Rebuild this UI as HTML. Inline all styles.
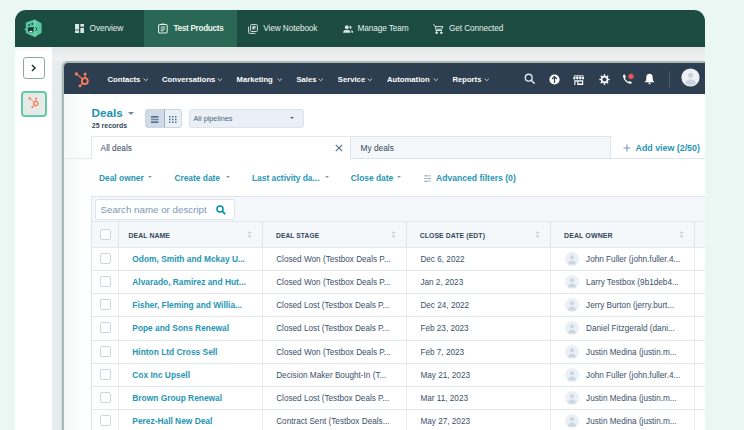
<!DOCTYPE html>
<html><head><meta charset="utf-8">
<style>
*{margin:0;padding:0;box-sizing:border-box}
html,body{width:744px;height:430px;overflow:hidden;background:#eaf7f3;font-family:"Liberation Sans",sans-serif}
#card{position:absolute;left:0;top:0;width:744px;height:430px;clip-path:inset(10px 39px 0 15px round 11px 11px 0 0);background:#fff}
.a{position:absolute;white-space:nowrap}
.tn{position:absolute;top:10px;height:37px;line-height:37px;font-size:8.3px;letter-spacing:-0.12px;color:#e4eeea;white-space:nowrap}
.hn{position:absolute;top:63.7px;height:31px;line-height:31px;font-size:7.7px;font-weight:bold;color:#fff;white-space:nowrap}
.chev{position:absolute;width:3px;height:3px;border-right:0.9px solid #c4ced8;border-bottom:0.9px solid #c4ced8;transform:rotate(45deg)}
.car{position:absolute;width:0;height:0;border-left:2.5px solid transparent;border-right:2.5px solid transparent;border-top:3px solid #7c98b6}
.flt{position:absolute;top:171px;height:14px;line-height:14px;font-size:8.4px;font-weight:bold;color:#1f96b4;white-space:nowrap}
.cb{position:absolute;left:100px;width:11px;height:11px;border:1px solid #cbd6e2;border-radius:2px;background:#fff}
.th{position:absolute;top:222.5px;height:26px;line-height:26px;font-size:7px;font-weight:bold;color:#33475b;white-space:nowrap;letter-spacing:0.1px}
.hl{position:absolute;height:1px;background:#e3e8ee}
.vl{position:absolute;width:1px;background:#e3e8ee}
.td{position:absolute;height:23px;line-height:25px;font-size:8.2px;color:#3b506a;white-space:nowrap}
.lk{position:absolute;height:23px;line-height:25px;font-size:8.4px;font-weight:bold;color:#1f96b4;white-space:nowrap}
.sort{position:absolute;width:5px;height:9px}
.av{position:absolute;left:565px;width:14px;height:14px;border-radius:50%;background:#eaf0f6;overflow:hidden}
</style></head><body>
<div id="card">
<div class="a" style="left:15px;top:10px;width:690px;height:37px;background:#1c4b42"></div>
<div class="a" style="left:144px;top:10px;width:93px;height:37px;background:#2a6754"></div>
<svg class="a" style="left:20px;top:16px" width="26" height="24" viewBox="20 16 26 24">
<path d="M25.8 23.2 Q25.8 22.6 26.4 22.3 L33.9 19.7 Q34.5 19.5 35.1 19.8 L41 22.9 Q41.6 23.2 41.6 23.9 V32.3 Q41.6 32.9 41 33.2 L35.1 36.8 Q34.5 37.1 33.9 36.8 L26.4 33.2 Q25.8 32.9 25.8 32.3Z" fill="#5ac8a0"/>
<path d="M34.5 19.6 L35.9 20.3 V36.4 L34.5 37Z" fill="#7ad8b6"/>
<path d="M24.6 28.6 h1.6 v1.4 h-1.6z" fill="#5ac8a0"/>
<rect x="28.3" y="24.3" width="1.6" height="1.6" fill="#173a33"/>
<rect x="31.5" y="23" width="1.6" height="1.7" fill="#173a33"/>
<path d="M27.7 27.4 L33.8 26.9 L33.4 31.2 Q32.6 33 30.6 33 Q28.6 33 28.2 31.2Z" fill="#173a33"/>
<path d="M29 31.6 Q30.6 30.4 32.6 30.9 Q31.9 32.6 30.4 32.7 Q29.4 32.6 29 31.6Z" fill="#e9f6f1"/>
<path d="M35 27.2 Q37 27.6 36.8 29 Q36.7 30.4 35 30.8" stroke="#173a33" stroke-width="0.8" fill="none"/>
</svg>
<svg class="a" style="left:74.6px;top:24px" width="9.6" height="9.2" viewBox="0 0 9.6 9.2" fill="#d9e7e2">
<rect x="0" y="0" width="4.1" height="5.6" /><rect x="5.4" y="0" width="4.1" height="2.7"/><rect x="0" y="6.4" width="4.1" height="2.8"/><rect x="5.4" y="3.9" width="4.1" height="5.3"/></svg>
<div class="tn" style="left:89.6px">Overview</div>
<svg class="a" style="left:157.6px;top:23px" width="10" height="10.5" viewBox="0 0 10 10.5" fill="none" stroke="#e6f0ec" stroke-width="1.05">
<rect x="0.6" y="1.5" width="8.6" height="8.5" rx="1.3"/><path d="M3.6 1.2 h2.6" stroke-width="1.5"/><path d="M2.7 4 h4.4 M2.7 5.9 h4.4 M2.7 7.8 h2.8"/></svg>
<div class="tn" style="left:173.4px;font-weight:bold;font-size:8.2px;letter-spacing:-0.3px;color:#eef5f2">Test Products</div>
<svg class="a" style="left:247.8px;top:23.6px" width="10" height="10" viewBox="0 0 10 10" fill="none" stroke="#d9e7e2" stroke-width="0.95">
<rect x="2.6" y="0.6" width="6.8" height="6.9" rx="0.9"/><path d="M0.6 2.6 v5.9 q0 0.9 0.9 0.9 h5.9"/><path d="M4.4 2.2 h3.2 v3.3 h-3.2z" fill="#d9e7e2" stroke="none"/><path d="M6.2 4 h1.4 v1.5 h-1.4z" fill="#1c4b42" stroke="none"/></svg>
<div class="tn" style="left:263.3px">View Notebook</div>
<svg class="a" style="left:342.5px;top:24.5px" width="10.5" height="8" viewBox="0 0 10.5 8" fill="#d9e7e2">
<circle cx="3.8" cy="2.2" r="1.9"/><path d="M0 7.8 q0.2 -3 3.8 -3 q3.6 0 3.8 3z"/><path d="M6.7 0.5 a1.8 1.8 0 0 1 0 3.6z"/><path d="M8 4.9 q2.3 0.6 2.5 2.9 h-1.8 q0 -1.6 -0.7 -2.9z"/></svg>
<div class="tn" style="left:357.4px">Manage Team</div>
<svg class="a" style="left:433px;top:23.5px" width="10.5" height="10.5" viewBox="0 0 10.5 10.5" fill="none" stroke="#d9e7e2" stroke-width="1">
<path d="M0.3 0.6 L2 1.6 L3.2 6.5 H9 M2.7 2.6 H9.9 L8.6 5.2 H3.6"/><circle cx="3.6" cy="8.8" r="0.9" fill="#d9e7e2"/><circle cx="8.4" cy="8.8" r="0.9" fill="#d9e7e2"/><path d="M3.2 6.5 v1.3"/></svg>
<div class="tn" style="left:449px">Get Connected</div>
<div class="a" style="left:52px;top:47px;width:660px;height:400px;background:#e7ecec"></div>
<div class="a" style="left:52px;top:47px;width:660px;height:14px;background:linear-gradient(#e3e7e7,#f1f3f3)"></div>
<div class="a" style="left:15px;top:47px;width:37px;height:5px;background:linear-gradient(rgba(0,0,0,0.04),rgba(0,0,0,0))"></div>
<div class="a" style="left:23px;top:57px;width:21.5px;height:21.5px;border:1.2px solid #8ea8a1;border-radius:3px;background:#fff"></div>
<svg class="a" style="left:30px;top:63.5px" width="7" height="8" viewBox="0 0 7 8"><path d="M2 1 L5 4 L2 7" stroke="#1f3b36" stroke-width="1.5" fill="none"/></svg>
<div class="a" style="left:21px;top:91px;width:26px;height:26px;border:2px solid #62cba3;border-radius:4px;background:#e6ebea"></div>
<svg class="a" style="left:28.3px;top:97.3px" width="11.52" height="11.52" viewBox="0 0 16 16">
<circle cx="10.8" cy="9.1" r="3" stroke="#ff7a59" stroke-width="1.8" fill="none"/>
<path d="M2.4 1.9 L8.6 7" stroke="#ff7a59" stroke-width="1.1"/><circle cx="2.4" cy="1.9" r="1.7" fill="#ff7a59"/>
<path d="M11.1 2.3 V6" stroke="#ff7a59" stroke-width="1.1"/><circle cx="11.1" cy="2.1" r="1.5" fill="#ff7a59"/>
<path d="M6 13.8 L8.7 11.2" stroke="#ff7a59" stroke-width="1.1"/><circle cx="6" cy="13.9" r="1.4" fill="#ff7a59"/>
</svg>
<div class="a" style="left:62px;top:61px;width:700px;height:420px;border:2px solid #a6bbb6;border-radius:6px;background:#fff;overflow:hidden;box-shadow:-1px 0 2px rgba(0,0,0,0.08)"><div style="position:absolute;left:0;top:0;width:700px;height:31px;background:#2d3e50"></div><div style="position:absolute;left:0;top:31px;width:700px;height:2px;background:linear-gradient(rgba(0,0,0,0.06),rgba(0,0,0,0))"></div><div style="position:absolute;left:0;top:31px;width:28px;height:400px;background:linear-gradient(90deg,#f6f8f8,#ffffff)"></div></div>
<svg class="a" style="left:74px;top:71.6px" width="16" height="16" viewBox="0 0 16 16">
<circle cx="10.8" cy="9.1" r="3" stroke="#ff7a59" stroke-width="1.8" fill="none"/>
<path d="M2.4 1.9 L8.6 7" stroke="#ff7a59" stroke-width="1.1"/><circle cx="2.4" cy="1.9" r="1.7" fill="#ff7a59"/>
<path d="M11.1 2.3 V6" stroke="#ff7a59" stroke-width="1.1"/><circle cx="11.1" cy="2.1" r="1.5" fill="#ff7a59"/>
<path d="M6 13.8 L8.7 11.2" stroke="#ff7a59" stroke-width="1.1"/><circle cx="6" cy="13.9" r="1.4" fill="#ff7a59"/>
</svg>
<div class="hn" style="left:107.5px">Contacts</div>
<svg class="a" style="left:142.7px;top:78px" width="5.5" height="3.5" viewBox="0 0 5.5 3.5"><path d="M0.6 0.6 L2.75 2.7 L4.9 0.6" stroke="#c9d3dd" stroke-width="0.95" fill="none"/></svg>
<div class="hn" style="left:162px">Conversations</div>
<svg class="a" style="left:217px;top:78px" width="5.5" height="3.5" viewBox="0 0 5.5 3.5"><path d="M0.6 0.6 L2.75 2.7 L4.9 0.6" stroke="#c9d3dd" stroke-width="0.95" fill="none"/></svg>
<div class="hn" style="left:236.5px">Marketing</div>
<svg class="a" style="left:276.5px;top:78px" width="5.5" height="3.5" viewBox="0 0 5.5 3.5"><path d="M0.6 0.6 L2.75 2.7 L4.9 0.6" stroke="#c9d3dd" stroke-width="0.95" fill="none"/></svg>
<div class="hn" style="left:296.4px">Sales</div>
<svg class="a" style="left:318px;top:78px" width="5.5" height="3.5" viewBox="0 0 5.5 3.5"><path d="M0.6 0.6 L2.75 2.7 L4.9 0.6" stroke="#c9d3dd" stroke-width="0.95" fill="none"/></svg>
<div class="hn" style="left:337.8px">Service</div>
<svg class="a" style="left:366.5px;top:78px" width="5.5" height="3.5" viewBox="0 0 5.5 3.5"><path d="M0.6 0.6 L2.75 2.7 L4.9 0.6" stroke="#c9d3dd" stroke-width="0.95" fill="none"/></svg>
<div class="hn" style="left:387px">Automation</div>
<svg class="a" style="left:433px;top:78px" width="5.5" height="3.5" viewBox="0 0 5.5 3.5"><path d="M0.6 0.6 L2.75 2.7 L4.9 0.6" stroke="#c9d3dd" stroke-width="0.95" fill="none"/></svg>
<div class="hn" style="left:452.4px">Reports</div>
<svg class="a" style="left:483.7px;top:78px" width="5.5" height="3.5" viewBox="0 0 5.5 3.5"><path d="M0.6 0.6 L2.75 2.7 L4.9 0.6" stroke="#c9d3dd" stroke-width="0.95" fill="none"/></svg>
<svg class="a" style="left:524px;top:73px" width="12" height="12" viewBox="0 0 12 12"><circle cx="4.7" cy="4.7" r="3.4" stroke="#dfe6ee" stroke-width="1.4" fill="none"/><path d="M7.2 7.2 L10.6 10.6" stroke="#dfe6ee" stroke-width="1.5"/></svg>
<svg class="a" style="left:549px;top:73.5px" width="11" height="11" viewBox="0 0 11 11"><circle cx="5.5" cy="5.5" r="5.1" fill="#fff"/><path d="M5.5 9 V2.6 M3 5 L5.5 2.5 L8 5" stroke="#2d3e50" stroke-width="1.2" fill="none"/></svg>
<svg class="a" style="left:572.5px;top:74.5px" width="11.5" height="10.5" viewBox="0 0 11.5 10.5" fill="#fff"><path d="M1.2 0.3 H10.3 L11.3 3.2 Q11.3 4.4 10 4.4 Q8.7 4.4 8.6 3.3 Q8.4 4.4 7.2 4.4 Q5.9 4.4 5.75 3.3 Q5.6 4.4 4.3 4.4 Q3.1 4.4 2.9 3.3 Q2.8 4.4 1.5 4.4 Q0.2 4.4 0.2 3.2Z"/><path d="M0.3 1.6 H11.2" stroke="#2d3e50" stroke-width="0.5"/><path d="M3 0.3 L2.6 4 M5.75 0.3 V4 M8.5 0.3 L8.9 4" stroke="#2d3e50" stroke-width="0.55"/><path d="M1.3 5.2 H10.2 V10.3 H1.3Z"/><rect x="2.4" y="6.6" width="1.9" height="3.7" fill="#2d3e50"/><rect x="5.4" y="6.6" width="3.6" height="1.9" fill="#2d3e50"/></svg>
<svg class="a" style="left:598.5px;top:74px" width="11" height="11" viewBox="0 0 11 11"><g fill="#fff"><circle cx="5.5" cy="5.5" r="3.6"/>
<rect x="4.7" y="0.3" width="1.6" height="2.2" rx="0.3" transform="rotate(0 5.5 5.5)"/><rect x="4.7" y="0.3" width="1.6" height="2.2" rx="0.3" transform="rotate(45 5.5 5.5)"/><rect x="4.7" y="0.3" width="1.6" height="2.2" rx="0.3" transform="rotate(90 5.5 5.5)"/><rect x="4.7" y="0.3" width="1.6" height="2.2" rx="0.3" transform="rotate(135 5.5 5.5)"/><rect x="4.7" y="0.3" width="1.6" height="2.2" rx="0.3" transform="rotate(180 5.5 5.5)"/><rect x="4.7" y="0.3" width="1.6" height="2.2" rx="0.3" transform="rotate(225 5.5 5.5)"/><rect x="4.7" y="0.3" width="1.6" height="2.2" rx="0.3" transform="rotate(270 5.5 5.5)"/><rect x="4.7" y="0.3" width="1.6" height="2.2" rx="0.3" transform="rotate(315 5.5 5.5)"/></g><circle cx="5.5" cy="5.5" r="2.1" fill="#2d3e50"/></svg>
<svg class="a" style="left:622px;top:72.5px" width="13" height="12" viewBox="0 0 13 12"><path d="M0.9 2.9 Q0.7 1.9 2 1.4 L2.5 1.3 L3.9 4.1 L2.9 5.2 Q3.8 7.7 6.3 8.9 L7.3 7.9 L9.9 9.2 L9.8 9.8 Q9.4 10.9 8.3 10.7 Q2.3 9.6 0.9 2.9Z" fill="#fff"/><circle cx="9" cy="3.4" r="3" fill="#f2545b" stroke="#2d3e50" stroke-width="0.7"/></svg>
<svg class="a" style="left:644px;top:72.5px" width="11" height="12" viewBox="0 0 11 12" fill="#fff"><path d="M5.5 0.8 Q8.6 0.8 8.7 4.5 L8.9 7.6 L10.5 9.3 H0.5 L2.1 7.6 L2.3 4.5 Q2.4 0.8 5.5 0.8Z"/><rect x="4.6" y="9.5" width="1.8" height="1.7"/></svg>
<div class="a" style="left:668.5px;top:70.5px;width:1px;height:17px;background:#425b76"></div>
<svg class="a" style="left:680.8px;top:68.2px" width="19" height="19" viewBox="0 0 20 20"><circle cx="10" cy="10" r="9.6" fill="#eef2f6"/><circle cx="10" cy="7.6" r="2.7" fill="#cbd6e2"/><path d="M4.2 16.2 Q5.2 11.8 10 11.8 Q14.8 11.8 15.8 16.2 Q13.5 18.3 10 18.3 Q6.5 18.3 4.2 16.2Z" fill="#cbd6e2"/></svg>
<div class="a" style="left:91.5px;top:104px;height:18px;line-height:18px;font-size:11.7px;font-weight:bold;color:#1a93b2">Deals</div>
<div class="car" style="left:127.5px;top:111.5px;border-left-width:3px;border-right-width:3px;border-top-width:3.5px;border-top-color:#6a87a6"></div>
<div class="a" style="left:91.8px;top:119.7px;height:11px;line-height:11px;font-size:7px;font-weight:bold;color:#33475b">25 records</div>
<div class="a" style="left:145px;top:109px;width:37px;height:19px;border:1px solid #cbd6e2;border-radius:3px;background:#eaf0f6;overflow:hidden"><div style="position:absolute;left:-1px;top:-1px;width:19.5px;height:19px;background:#d0dbe7;border:1px solid #99afc4;border-radius:3px 0 0 3px"></div></div>
<svg class="a" style="left:151px;top:115.5px" width="7.5" height="7" viewBox="0 0 7.5 7"><rect x="0" y="0" width="7.5" height="1.6" fill="#516f90"/><rect x="0" y="2.7" width="7.5" height="1.6" fill="#6d88a4"/><rect x="0" y="5.4" width="7.5" height="1.6" fill="#516f90"/></svg>
<svg class="a" style="left:169px;top:115.5px" width="7.5" height="7" viewBox="0 0 7.5 7" fill="#516f90"><rect x="0" y="0" width="1.5" height="1.5"/><rect x="0" y="2.75" width="1.5" height="1.5"/><rect x="0" y="5.5" width="1.5" height="1.5"/><rect x="3" y="0" width="1.5" height="1.5"/><rect x="3" y="2.75" width="1.5" height="1.5"/><rect x="3" y="5.5" width="1.5" height="1.5"/><rect x="6" y="0" width="1.5" height="1.5"/><rect x="6" y="2.75" width="1.5" height="1.5"/><rect x="6" y="5.5" width="1.5" height="1.5"/></svg>
<div class="a" style="left:189px;top:109px;width:115px;height:19px;border:1px solid #dbe3ec;border-radius:3px;background:#eaf0f6"></div>
<div class="a" style="left:193.5px;top:112px;height:13px;line-height:13px;font-size:7.3px;color:#4a6482">All pipelines</div>
<div class="car" style="left:290px;top:117.3px;border-left-width:2px;border-right-width:2px;border-top-width:2.4px;border-top-color:#516f90"></div>
<div class="a" style="left:64px;top:158px;width:27px;height:1px;background:#e6eaef"></div>
<div class="a" style="left:91px;top:136px;width:260px;height:23px;border:1px solid #e3e8ee;border-bottom:none;background:#fff"></div>
<div class="a" style="left:100.6px;top:141px;height:14px;line-height:14px;font-size:8.3px;color:#33475b">All deals</div>
<svg class="a" style="left:334.8px;top:144.3px" width="8" height="8" viewBox="0 0 8 8"><path d="M0.8 0.8 L7.2 7.2 M7.2 0.8 L0.8 7.2" stroke="#516f90" stroke-width="1.15"/></svg>
<div class="a" style="left:350px;top:136px;width:261px;height:23px;border:1px solid #dfe3eb;background:#f5f8fa"></div>
<div class="a" style="left:360.6px;top:141px;height:14px;line-height:14px;font-size:8.3px;color:#33475b">My deals</div>
<div class="a" style="left:611px;top:158px;width:100px;height:1px;background:#dfe3eb"></div>
<svg class="a" style="left:622.5px;top:143.5px" width="8" height="8" viewBox="0 0 8 8"><path d="M4 0.5 V7.5 M0.5 4 H7.5" stroke="#7c98b6" stroke-width="1.1"/></svg>
<div class="a" style="left:635.5px;top:141px;height:14px;line-height:14px;font-size:8.85px;font-weight:bold;color:#1f96b4">Add view (2/50)</div>
<div class="flt" style="left:99px">Deal owner</div>
<div class="car" style="left:148px;top:176.2px;border-left-width:2.2px;border-right-width:2.2px;border-top-width:2.4px;border-top-color:#7c98b6"></div>
<div class="flt" style="left:174.4px">Create date</div>
<div class="car" style="left:226px;top:176.2px;border-left-width:2.2px;border-right-width:2.2px;border-top-width:2.4px;border-top-color:#7c98b6"></div>
<div class="flt" style="left:252px">Last activity da...</div>
<div class="car" style="left:325px;top:176.2px;border-left-width:2.2px;border-right-width:2.2px;border-top-width:2.4px;border-top-color:#7c98b6"></div>
<div class="flt" style="left:350.8px">Close date</div>
<div class="car" style="left:397px;top:176.2px;border-left-width:2.2px;border-right-width:2.2px;border-top-width:2.4px;border-top-color:#7c98b6"></div>
<svg class="a" style="left:423.8px;top:174.5px" width="7.5" height="7" viewBox="0 0 7.5 7" fill="none" stroke="#8da4bd" stroke-width="0.75"><path d="M0 0.8 H7.5 M0 3.5 H7.5 M0 6.2 H7.5"/><path d="M2.3 0 V1.6 M5.2 2.7 V4.3 M2.3 5.4 V7" stroke-width="0.9"/></svg>
<div class="flt" style="left:436px;font-size:8.6px">Advanced filters (0)</div>
<div class="a" style="left:91px;top:196px;width:640px;height:240px;border:1px solid #dfe3eb;background:#f5f8fa"></div>
<div class="a" style="left:94.5px;top:199px;width:140.5px;height:21px;border:1px solid #dfe3eb;border-radius:3px;background:#fff"></div>
<div class="a" style="left:100.5px;top:202px;height:15px;line-height:15px;font-size:9.75px;color:#7c98b6">Search name or descript</div>
<svg class="a" style="left:216px;top:204.5px" width="10" height="10" viewBox="0 0 10 10"><circle cx="4" cy="4" r="3" stroke="#0091ae" stroke-width="1.5" fill="none"/><path d="M6.2 6.2 L9.2 9.2" stroke="#0091ae" stroke-width="1.7"/></svg>
<div class="hl" style="left:91px;top:221px;width:640px"></div>
<div class="cb" style="top:229.3px"></div>
<div class="th" style="left:128.5px;font-size:6.85px">DEAL NAME</div>
<div class="th" style="left:276px;font-size:6.65px">DEAL STAGE</div>
<div class="th" style="left:419.7px;font-size:6.85px">CLOSE DATE (EDT)</div>
<div class="th" style="left:564px;font-size:7px">DEAL OWNER</div>
<svg class="sort" style="left:247.0px;top:229.5px" viewBox="0 0 5 9"><path d="M0.5 3.5 L2.5 1 L4.5 3.5Z M0.5 5.5 L2.5 8 L4.5 5.5Z" fill="#c3cfdc"/></svg>
<svg class="sort" style="left:391.0px;top:229.5px" viewBox="0 0 5 9"><path d="M0.5 3.5 L2.5 1 L4.5 3.5Z M0.5 5.5 L2.5 8 L4.5 5.5Z" fill="#c3cfdc"/></svg>
<svg class="sort" style="left:535.1px;top:229.5px" viewBox="0 0 5 9"><path d="M0.5 3.5 L2.5 1 L4.5 3.5Z M0.5 5.5 L2.5 8 L4.5 5.5Z" fill="#c3cfdc"/></svg>
<svg class="sort" style="left:679.3px;top:229.5px" viewBox="0 0 5 9"><path d="M0.5 3.5 L2.5 1 L4.5 3.5Z M0.5 5.5 L2.5 8 L4.5 5.5Z" fill="#c3cfdc"/></svg>
<div class="a" style="left:92px;top:247px;width:640px;height:200px;background:#fff"></div>
<div class="hl" style="left:91px;top:247px;width:640px"></div>
<div class="vl" style="left:118.0px;top:221px;height:26px;background:#dfe4eb"></div>
<div class="vl" style="left:118.0px;top:248px;height:200px;background:#eaedf2"></div>
<div class="vl" style="left:262.0px;top:221px;height:26px;background:#dfe4eb"></div>
<div class="vl" style="left:262.0px;top:248px;height:200px;background:#eaedf2"></div>
<div class="vl" style="left:406.0px;top:221px;height:26px;background:#dfe4eb"></div>
<div class="vl" style="left:406.0px;top:248px;height:200px;background:#eaedf2"></div>
<div class="vl" style="left:550.1px;top:221px;height:26px;background:#dfe4eb"></div>
<div class="vl" style="left:550.1px;top:248px;height:200px;background:#eaedf2"></div>
<div class="vl" style="left:694.3px;top:221px;height:26px;background:#dfe4eb"></div>
<div class="vl" style="left:694.3px;top:248px;height:200px;background:#eaedf2"></div>
<div class="hl" style="left:91px;top:270.15px;width:640px"></div>
<div class="cb" style="top:253.00px"></div>
<div class="lk" style="left:132.3px;top:247.00px">Odom, Smith and Mckay U...</div>
<div class="td" style="left:276.2px;top:247.00px">Closed Won (Testbox Deals P...</div>
<div class="td" style="left:420.4px;top:247.00px">Dec 6, 2022</div>
<div class="av" style="top:252.00px"><svg width="14" height="14" viewBox="0 0 14 14"><circle cx="7" cy="5.3" r="2" fill="#cbd6e2"/><path d="M3 12.5 Q3.5 8.6 7 8.6 Q10.5 8.6 11 12.5Z" fill="#cbd6e2"/></svg></div>
<div class="td" style="left:586.1px;top:247.00px">John Fuller (john.fuller.4...</div>
<div class="hl" style="left:91px;top:293.30px;width:640px"></div>
<div class="cb" style="top:276.15px"></div>
<div class="lk" style="left:132.3px;top:270.15px">Alvarado, Ramirez and Hut...</div>
<div class="td" style="left:276.2px;top:270.15px">Closed Won (Testbox Deals P...</div>
<div class="td" style="left:420.4px;top:270.15px">Jan 2, 2023</div>
<div class="av" style="top:275.15px"><svg width="14" height="14" viewBox="0 0 14 14"><circle cx="7" cy="5.3" r="2" fill="#cbd6e2"/><path d="M3 12.5 Q3.5 8.6 7 8.6 Q10.5 8.6 11 12.5Z" fill="#cbd6e2"/></svg></div>
<div class="td" style="left:586.1px;top:270.15px">Larry Testbox (9b1deb4...</div>
<div class="hl" style="left:91px;top:316.45px;width:640px"></div>
<div class="cb" style="top:299.30px"></div>
<div class="lk" style="left:132.3px;top:293.30px">Fisher, Fleming and Willia...</div>
<div class="td" style="left:276.2px;top:293.30px">Closed Lost (Testbox Deals P...</div>
<div class="td" style="left:420.4px;top:293.30px">Dec 24, 2022</div>
<div class="av" style="top:298.30px"><svg width="14" height="14" viewBox="0 0 14 14"><circle cx="7" cy="5.3" r="2" fill="#cbd6e2"/><path d="M3 12.5 Q3.5 8.6 7 8.6 Q10.5 8.6 11 12.5Z" fill="#cbd6e2"/></svg></div>
<div class="td" style="left:586.1px;top:293.30px">Jerry Burton (jerry.burt...</div>
<div class="hl" style="left:91px;top:339.60px;width:640px"></div>
<div class="cb" style="top:322.45px"></div>
<div class="lk" style="left:132.3px;top:316.45px">Pope and Sons Renewal</div>
<div class="td" style="left:276.2px;top:316.45px">Closed Lost (Testbox Deals P...</div>
<div class="td" style="left:420.4px;top:316.45px">Feb 23, 2023</div>
<div class="av" style="top:321.45px"><svg width="14" height="14" viewBox="0 0 14 14"><circle cx="7" cy="5.3" r="2" fill="#cbd6e2"/><path d="M3 12.5 Q3.5 8.6 7 8.6 Q10.5 8.6 11 12.5Z" fill="#cbd6e2"/></svg></div>
<div class="td" style="left:586.1px;top:316.45px">Daniel Fitzgerald (dani...</div>
<div class="hl" style="left:91px;top:362.75px;width:640px"></div>
<div class="cb" style="top:345.60px"></div>
<div class="lk" style="left:132.3px;top:339.60px">Hinton Ltd Cross Sell</div>
<div class="td" style="left:276.2px;top:339.60px">Closed Won (Testbox Deals P...</div>
<div class="td" style="left:420.4px;top:339.60px">Feb 7, 2023</div>
<div class="av" style="top:344.60px"><svg width="14" height="14" viewBox="0 0 14 14"><circle cx="7" cy="5.3" r="2" fill="#cbd6e2"/><path d="M3 12.5 Q3.5 8.6 7 8.6 Q10.5 8.6 11 12.5Z" fill="#cbd6e2"/></svg></div>
<div class="td" style="left:586.1px;top:339.60px">Justin Medina (justin.m...</div>
<div class="hl" style="left:91px;top:385.90px;width:640px"></div>
<div class="cb" style="top:368.75px"></div>
<div class="lk" style="left:132.3px;top:362.75px">Cox Inc Upsell</div>
<div class="td" style="left:276.2px;top:362.75px">Decision Maker Bought-In (T...</div>
<div class="td" style="left:420.4px;top:362.75px">May 21, 2023</div>
<div class="av" style="top:367.75px"><svg width="14" height="14" viewBox="0 0 14 14"><circle cx="7" cy="5.3" r="2" fill="#cbd6e2"/><path d="M3 12.5 Q3.5 8.6 7 8.6 Q10.5 8.6 11 12.5Z" fill="#cbd6e2"/></svg></div>
<div class="td" style="left:586.1px;top:362.75px">John Fuller (john.fuller.4...</div>
<div class="hl" style="left:91px;top:409.05px;width:640px"></div>
<div class="cb" style="top:391.90px"></div>
<div class="lk" style="left:132.3px;top:385.90px">Brown Group Renewal</div>
<div class="td" style="left:276.2px;top:385.90px">Closed Lost (Testbox Deals P...</div>
<div class="td" style="left:420.4px;top:385.90px">Mar 11, 2023</div>
<div class="av" style="top:390.90px"><svg width="14" height="14" viewBox="0 0 14 14"><circle cx="7" cy="5.3" r="2" fill="#cbd6e2"/><path d="M3 12.5 Q3.5 8.6 7 8.6 Q10.5 8.6 11 12.5Z" fill="#cbd6e2"/></svg></div>
<div class="td" style="left:586.1px;top:385.90px">Justin Medina (justin.m...</div>
<div class="hl" style="left:91px;top:432.20px;width:640px"></div>
<div class="cb" style="top:415.05px"></div>
<div class="lk" style="left:132.3px;top:409.05px">Perez-Hall New Deal</div>
<div class="td" style="left:276.2px;top:409.05px">Contract Sent (Testbox Deals...</div>
<div class="td" style="left:420.4px;top:409.05px">May 27, 2023</div>
<div class="av" style="top:414.05px"><svg width="14" height="14" viewBox="0 0 14 14"><circle cx="7" cy="5.3" r="2" fill="#cbd6e2"/><path d="M3 12.5 Q3.5 8.6 7 8.6 Q10.5 8.6 11 12.5Z" fill="#cbd6e2"/></svg></div>
<div class="td" style="left:586.1px;top:409.05px">Justin Medina (justin.m...</div>
</div>
</body></html>
